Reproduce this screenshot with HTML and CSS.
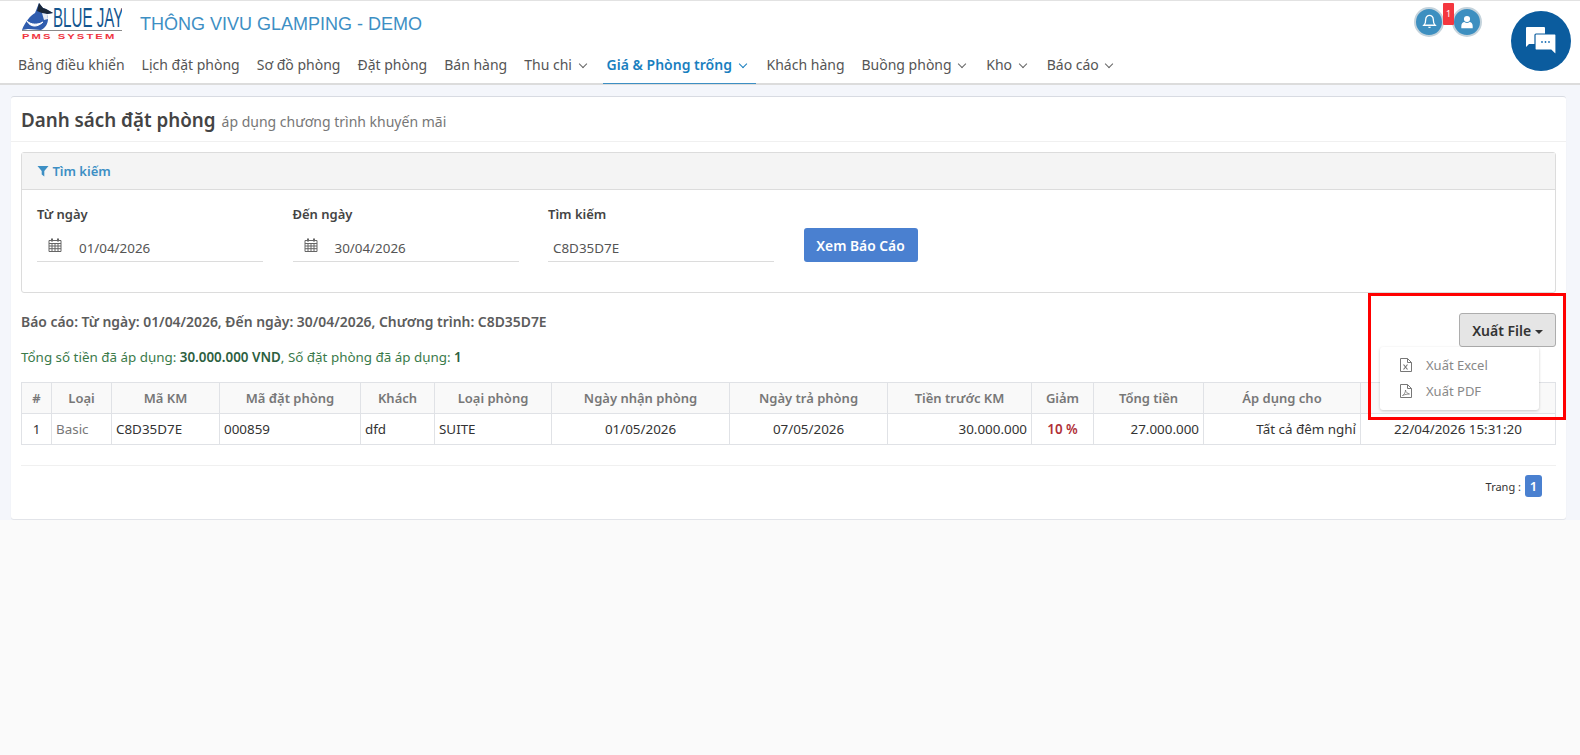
FILE: index.html

```html
<!DOCTYPE html>
<html lang="vi">
<head>
    <meta charset="UTF-8">
    <meta name="viewport" content="width=device-width, initial-scale=1.0">
    <title>Danh sách đặt phòng</title>
    <link rel="stylesheet" href="styles.css">
</head>
<body>
    <header class="topbar">
        <div class="brand-row">
            <svg class="logo" viewBox="0 0 102 38" width="102" height="38">
                <path d="M2 27 C5 19 10 13 15 10 L19 0 L23 5 L26 6 L33 10 L27 11 L28 16 C28 21 25 25 21 27 L8 26 Z" fill="#2f5cae"/>
                <path d="M19 0 L23 5 L26 6 L33 10 L27 11 L22 10 L17 8 Z" fill="#1b2738"/>
                <path d="M22 10 L27 11 L28 16 L24 17 Z" fill="#e6ebf3"/>
                <path d="M7 18 C10 24 17 25 23 19 C18 22 11 22 7 18 Z" fill="#ffffff" stroke="#ffffff"/>
                <path d="M2 27.500 H102" stroke="#8a8a8a" stroke-width="1"/>
                <text class="logo-name" transform="translate(33 24) scale(.56 1)">BLUE JAY</text>
                <text class="logo-sub" transform="translate(2 36) scale(1.400 1)">PMS SYSTEM</text>
            </svg>
            <span class="hotel-name">THÔNG VIVU GLAMPING - DEMO</span>
            <div class="top-icons">
                <span class="round-icon">
                    <svg viewBox="0 0 16 16" width="15" height="15"><path d="M8 1.500a4 4 0 0 0-4 4c0 4-1 5.500-2 6.500h12c-1-1-2-2.500-2-6.500a4 4 0 0 0-4-4z" fill="none" stroke="#fff" stroke-width="1.400"/><path d="M6.500 13.500h3a1.500 1.500 0 0 1-3 0z" fill="#fff"/></svg>
                </span>
                <span class="badge">1</span>
                <span class="round-icon">
                    <svg viewBox="0 0 16 16" width="14" height="14"><circle cx="8" cy="4.500" r="3.500" fill="#fff"/><path d="M1.500 15v-2.500c0-3 2-4.500 3.500-4.500 1 .7 2 1 3 1s2-.3 3-1c1.500 0 3.500 1.500 3.500 4.500V15z" fill="#fff"/></svg>
                </span>
            </div>
        </div>
        <nav class="menu">
            <a>Bảng điều khiển</a>
            <a>Lịch đặt phòng</a>
            <a>Sơ đồ phòng</a>
            <a>Đặt phòng</a>
            <a>Bán hàng</a>
            <a>Thu chi <i class="chev"></i></a>
            <a class="active">Giá &amp; Phòng trống <i class="chev"></i></a>
            <a>Khách hàng</a>
            <a>Buồng phòng <i class="chev"></i></a>
            <a>Kho <i class="chev"></i></a>
            <a>Báo cáo <i class="chev"></i></a>
        </nav>
        <span class="chat-btn">
            <svg viewBox="0 0 32 28" width="32" height="28">
                <path d="M2 0h17a1 1 0 0 1 1 1v16H4l-3 3V1a1 1 0 0 1 1-1z" fill="#fff"/>
                <path d="M11 7h19a1 1 0 0 1 1 1v20l-5-5H11a1 1 0 0 1-1-1V8a1 1 0 0 1 1-1z" fill="#fff" stroke="#0b5c9e" stroke-width="1.200"/>
                <circle cx="17" cy="15" r="0.900" fill="#1a6fb5"/><circle cx="20.500" cy="15" r="0.900" fill="#1a6fb5"/><circle cx="24" cy="15" r="0.900" fill="#1a6fb5"/>
            </svg>
        </span>
    </header>

    <div class="page">
        <div class="card">
            <div class="card-title">
                <h1>Danh sách đặt phòng</h1>
                <small>áp dụng chương trình khuyến mãi</small>
            </div>

            <div class="card-body">
                <!-- Search panel -->
                <div class="panel">
                    <div class="panel-head">
                        <svg viewBox="0 0 12 12" width="12" height="12"><path d="M0.500 1h11L7.300 6v5.500L4.700 9.500V6z" fill="#3d8fc4"/></svg>
                        Tìm kiếm
                    </div>
                    <div class="panel-body">
                        <div class="field">
                            <label>Từ ngày</label>
                            <div class="input-line">
                                <svg class="cal" viewBox="0 0 14 14" width="14" height="14"><path d="M1 2.500h12V13.500H1zM1 5.500h12M1 8h12M1 10.700h12M4 5.500v8M7 5.500v8M10 5.500v8" fill="none" stroke="#666" stroke-width="1"/><path d="M3 .500h2v3H3zM9 .500h2v3H9z" fill="#666"/></svg>
                                <span>01/04/2026</span>
                            </div>
                        </div>
                        <div class="field">
                            <label>Đến ngày</label>
                            <div class="input-line">
                                <svg class="cal" viewBox="0 0 14 14" width="14" height="14"><path d="M1 2.500h12V13.500H1zM1 5.500h12M1 8h12M1 10.700h12M4 5.500v8M7 5.500v8M10 5.500v8" fill="none" stroke="#666" stroke-width="1"/><path d="M3 .500h2v3H3zM9 .500h2v3H9z" fill="#666"/></svg>
                                <span>30/04/2026</span>
                            </div>
                        </div>
                        <div class="field">
                            <label>Tìm kiếm</label>
                            <div class="input-line plain">
                                <span>C8D35D7E</span>
                            </div>
                        </div>
                        <button class="btn-view">Xem Báo Cáo</button>
                    </div>
                </div>

                <!-- Report heading and export -->
                <div class="report-row">
                    <div>
                        <p class="report-info">Báo cáo: Từ ngày: 01/04/2026, Đến ngày: 30/04/2026, Chương trình: C8D35D7E</p>
                        <p class="report-sum">Tổng số tiền đã áp dụng: <b>30.000.000 VND</b>, Số đặt phòng đã áp dụng: <b>1</b></p>
                    </div>
                    <div class="export">
                        <button class="btn-export">Xuất File <i class="caret"></i></button>
                        <div class="export-menu">
                            <a>
                                <svg viewBox="0 0 12 14" width="12" height="14"><path d="M.5.500h7l4 4v9H.5zM7.500.500v4h4" fill="none" stroke="#777"/><path d="M3.500 6.500l4 5M7.500 6.500l-4 5" stroke="#777" stroke-width="1.200"/></svg>
                                Xuất Excel
                            </a>
                            <a>
                                <svg viewBox="0 0 12 14" width="12" height="14"><path d="M.5.500h7l4 4v9H.5zM7.500.500v4h4" fill="none" stroke="#777"/><path d="M2.500 11.500c2-1 3-3.500 3-5.500 0 2 2 3.500 4 4-2 0-5 .5-7 1.500z" fill="none" stroke="#777" stroke-width=".8"/></svg>
                                Xuất PDF
                            </a>
                        </div>
                    </div>
                </div>

                <table class="report-table">
                    <colgroup>
                        <col class="w30"><col class="w60"><col class="w108"><col class="w141"><col class="w74"><col class="w117"><col class="w178"><col class="w158"><col class="w144"><col class="w62"><col class="w110"><col class="w157"><col>
                    </colgroup>
                    <thead>
                        <tr>
                            <th>#</th>
                            <th>Loại</th>
                            <th>Mã KM</th>
                            <th>Mã đặt phòng</th>
                            <th>Khách</th>
                            <th>Loại phòng</th>
                            <th>Ngày nhận phòng</th>
                            <th>Ngày trả phòng</th>
                            <th>Tiền trước KM</th>
                            <th>Giảm</th>
                            <th>Tổng tiền</th>
                            <th>Áp dụng cho</th>
                            <th></th>
                        </tr>
                    </thead>
                    <tbody>
                        <tr>
                            <td class="center">1</td>
                            <td class="muted">Basic</td>
                            <td>C8D35D7E</td>
                            <td>000859</td>
                            <td>dfd</td>
                            <td>SUITE</td>
                            <td class="center">01/05/2026</td>
                            <td class="center">07/05/2026</td>
                            <td class="right">30.000.000</td>
                            <td class="center discount">10 %</td>
                            <td class="right">27.000.000</td>
                            <td class="right">Tất cả đêm nghỉ</td>
                            <td class="center">22/04/2026 15:31:20</td>
                        </tr>
                    </tbody>
                </table>

                <div class="pager">
                    <span>Trang :</span>
                    <span class="page-no">1</span>
                </div>
            </div>
        </div>
    </div>

    <!-- Highlight drawn over the export button -->
    <div class="highlight"></div>
</body>
</html>
```

FILE: styles.css

```css
body {
    margin: 0;
    background-color: #fafafa;
    font-family: "Noto Sans", "Open Sans", sans-serif;
    font-size: 13px;
    color: #333;
}
.topbar {
    position: relative;
    height: 82px;
    background-color: #ffffff;
    border-top: 1px solid #e2e2e2;
    border-bottom: 2px solid #dcdcdc;
}
.brand-row {
    display: flex;
    align-items: center;
    height: 46px;
    padding-left: 20px;
}
.logo {
    margin-top: -4px;
}
.logo-name {
    font-family: "Liberation Sans", sans-serif;
    font-size: 27px;
    fill: #14568f;
}
.logo-sub {
    font-family: "Liberation Sans", sans-serif;
    font-size: 8px;
    font-weight: bold;
    letter-spacing: 1.5px;
    fill: #f0353f;
}
.hotel-name {
    margin-left: 18px;
    font-family: "Liberation Sans", sans-serif;
    font-size: 18px;
    color: #3d8fc4;
}
.top-icons {
    position: relative;
    display: flex;
    gap: 8px;
    margin-left: auto;
    margin-right: 98px;
    margin-top: -5px;
}
.round-icon {
    display: flex;
    align-items: center;
    justify-content: center;
    width: 26px;
    height: 26px;
    border-radius: 50%;
    background-color: #3d8fc0;
    border: 2px solid #c4d3dc;
}
.badge {
    position: absolute;
    left: 29px;
    top: -4px;
    width: 11px;
    height: 22px;
    background-color: #f4373f;
    border-radius: 1px;
    color: #fff;
    font-size: 9px;
    line-height: 22px;
    text-align: center;
}
.chat-btn {
    position: absolute;
    left: 1511px;
    top: 10px;
    display: flex;
    align-items: center;
    justify-content: center;
    width: 60px;
    height: 60px;
    border-radius: 50%;
    background-color: #0b5c9e;
}
.menu {
    display: flex;
    gap: 1px;
    padding-left: 10px;
}
.menu a {
    display: block;
    height: 36px;
    line-height: 35px;
    padding: 0 8px;
    font-size: 14px;
    color: #555;
    white-space: nowrap;
}
.menu a.active {
    margin: 0 2px 0 4px;
    padding: 0 6px 0 4px;
    color: #1a7fbf;
    font-weight: 600;
    border-bottom: 1px solid #3d8fc4;
}
.chev {
    display: inline-block;
    width: 5px;
    height: 5px;
    margin: 0 4px 3px 4px;
    border-right: 1px solid #666;
    border-bottom: 1px solid #666;
    transform: rotate(45deg);
}
.menu a.active .chev {
    border-color: #1a7fbf;
}
.page {
    height: 424px;
    padding: 11px 14px 0 11px;
    background-color: #f4f6fb;
}
.card {
    height: 423px;
    box-sizing: border-box;
    background-color: #ffffff;
    border-top: 1px solid #d8dbe2;
    border-radius: 3px;
    box-shadow: 0 1px 1px rgba(0,0,0,0.08);
}
.card-title {
    height: 44px;
    display: flex;
    align-items: baseline;
    gap: 6px;
    padding-left: 10px;
    border-bottom: 1px solid #f0f0f0;
}
.card-title h1 {
    margin: 0;
    font-size: 18.8px;
    line-height: 47px;
    font-weight: 600;
    color: #444;
}
.card-title small {
    font-size: 14px;
    color: #777;
}
.card-body {
    padding: 10px 10px 0;
}
.panel {
    height: 141px;
    box-sizing: border-box;
    border: 1px solid #dcdcdc;
    border-radius: 3px;
}
.panel-head {
    height: 36px;
    line-height: 36px;
    padding-left: 15px;
    background-color: #f4f4f4;
    border-bottom: 1px solid #dcdcdc;
    color: #3d8fc4;
    font-weight: 600;
}
.panel-head svg {
    vertical-align: -1px;
}
.panel-body {
    display: flex;
    align-items: flex-end;
    gap: 29.5px;
    padding: 15px 15px 0;
    height: 58px;
}
.field {
    width: 226px;
    margin-bottom: 1px;
}
.field label {
    display: block;
    height: 28px;
    line-height: 20px;
    font-weight: 600;
    color: #444;
}
.input-line {
    display: flex;
    align-items: center;
    gap: 17px;
    height: 29px;
    padding-left: 11px;
    border-bottom: 1px solid #dcdcdc;
    font-size: 13.4px;
    color: #555;
}
.input-line span {
    padding-top: 3px;
}
.input-line .cal {
    margin-top: -3px;
}
.input-line.plain {
    padding-left: 5px;
}
.btn-view {
    width: 114px;
    height: 34px;
    padding: 0;
    margin-bottom: 1px;
    background-color: #4a80d0;
    color: #fff;
    border: none;
    border-radius: 3px;
    font-family: inherit;
    font-size: 13.8px;
    font-weight: 600;
}
.report-row {
    display: flex;
    justify-content: space-between;
    height: 89px;
}
.report-row p {
    margin: 0;
}
.report-info {
    padding-top: 19px;
    font-size: 13.9px;
    font-weight: 600;
    color: #5c5c5c;
}
.report-sum {
    padding-top: 17px;
    font-size: 13.4px;
    color: #3a7a4a;
}
.report-sum b {
    color: #2c6040;
    font-weight: 600;
}
.export {
    position: relative;
    padding-top: 20px;
}
.btn-export {
    width: 97px;
    height: 34px;
    background-color: #e5e5e5;
    border: 1px solid #adadad;
    border-radius: 3px;
    color: #333;
    font-family: inherit;
    font-size: 14px;
    font-weight: 600;
    white-space: nowrap;
    padding: 0;
}
.caret {
    display: inline-block;
    vertical-align: 2px;
    border-top: 4px solid #333;
    border-left: 4px solid transparent;
    border-right: 4px solid transparent;
}
.export-menu {
    position: absolute;
    right: 17px;
    top: 54px;
    z-index: 5;
    width: 159px;
    height: 63px;
    box-sizing: border-box;
    padding: 5px 0;
    background-color: #fff;
    border-radius: 3px;
    box-shadow: 0 1px 3px rgba(0,0,0,0.2);
}
.export-menu a {
    display: flex;
    align-items: center;
    gap: 14px;
    height: 26px;
    padding-left: 20px;
    color: #888;
}
.report-table {
    width: 100%;
    border-collapse: collapse;
    table-layout: fixed;
}
.w30 { width: 30px; }
.w60 { width: 60px; }
.w108 { width: 108px; }
.w141 { width: 141px; }
.w74 { width: 74px; }
.w117 { width: 117px; }
.w178 { width: 178px; }
.w158 { width: 158px; }
.w144 { width: 144px; }
.w62 { width: 62px; }
.w110 { width: 110px; }
.w157 { width: 157px; }
.report-table th, .report-table td {
    height: 30px;
    padding: 0 4px;
    border: 1px solid #e0e2e6;
    white-space: nowrap;
    overflow: hidden;
}
.report-table td {
    font-size: 13.4px;
}
.report-table th {
    background-color: #f9f9f9;
    color: #777;
    font-weight: 600;
    text-align: center;
}
.center { text-align: center; }
.right { text-align: right; }
.muted { color: #777; }
.discount {
    color: #b03038;
    font-weight: 600;
}
.pager {
    display: flex;
    justify-content: flex-end;
    align-items: center;
    gap: 4px;
    margin-top: 20px;
    padding: 9px 14px 0 0;
    border-top: 1px solid #f0f0f0;
    font-size: 11px;
}
.page-no {
    width: 17px;
    height: 22px;
    line-height: 22px;
    background-color: #4a80d0;
    border-radius: 3px;
    color: #fff;
    font-size: 13px;
    font-weight: 600;
    text-align: center;
}
.highlight {
    position: absolute;
    left: 1368px;
    top: 293px;
    width: 192px;
    height: 121px;
    border: 3px solid #f00;
    z-index: 9;
}
```
